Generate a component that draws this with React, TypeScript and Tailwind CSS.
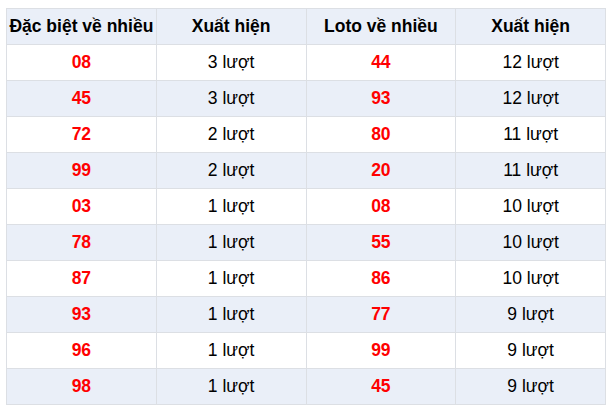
import React from 'react';

const rows: [string, string, string, string][] = [
  ['08', '3 lượt', '44', '12 lượt'],
  ['45', '3 lượt', '93', '12 lượt'],
  ['72', '2 lượt', '80', '11 lượt'],
  ['99', '2 lượt', '20', '11 lượt'],
  ['03', '1 lượt', '08', '10 lượt'],
  ['78', '1 lượt', '55', '10 lượt'],
  ['87', '1 lượt', '86', '10 lượt'],
  ['93', '1 lượt', '77', '9 lượt'],
  ['96', '1 lượt', '99', '9 lượt'],
  ['98', '1 lượt', '45', '9 lượt'],
];

const headers = ['Đặc biệt về nhiều', 'Xuất hiện', 'Loto về nhiều', 'Xuất hiện'];

export default function App() {
  return (
    <div className="w-[613px] h-[412px] bg-white pt-2 pl-[6px] font-['Liberation_Sans',Arial,sans-serif] text-[17.5px] text-black">
      <table className="w-[600px] border-collapse table-fixed">
        <thead>
          <tr className="h-[36px] bg-[#eaeff8]">
            {headers.map((h, i) => (
              <th key={i} className="border border-[#dcdfe4] font-bold text-center p-0 whitespace-nowrap">
                {h}
              </th>
            ))}
          </tr>
        </thead>
        <tbody>
          {rows.map((r, i) => (
            <tr key={i} className={`h-[36px] ${i % 2 === 1 ? 'bg-[#eaeff8]' : 'bg-white'}`}>
              <td className="border border-[#dcdfe4] text-center font-bold text-[#ff0000] p-0">{r[0]}</td>
              <td className="border border-[#dcdfe4] text-center p-0">{r[1]}</td>
              <td className="border border-[#dcdfe4] text-center font-bold text-[#ff0000] p-0">{r[2]}</td>
              <td className="border border-[#dcdfe4] text-center p-0">{r[3]}</td>
            </tr>
          ))}
        </tbody>
      </table>
    </div>
  );
}
